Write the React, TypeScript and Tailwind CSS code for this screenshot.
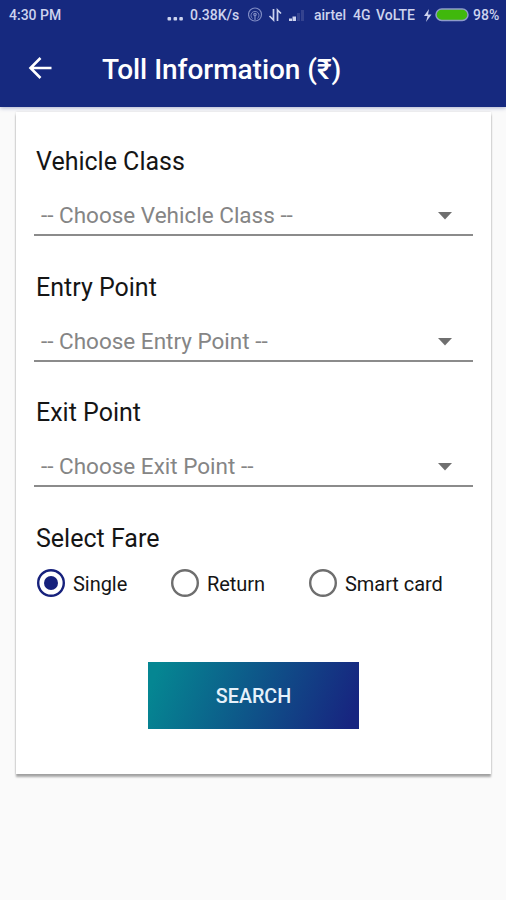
import React, { useState } from 'react'

interface SelectFieldProps {
  label: string;
  placeholder: string;
}

const fields: SelectFieldProps[] = [
  { label: 'Vehicle Class', placeholder: '-- Choose Vehicle Class --' },
  { label: 'Entry Point', placeholder: '-- Choose Entry Point --' },
  { label: 'Exit Point', placeholder: '-- Choose Exit Point --' },
]

const fares = [
  { name: 'Single', width: 'w-[134px]' },
  { name: 'Return', width: 'w-[138px]' },
  { name: 'Smart card', width: 'w-[150px]' },
]

const StatusBar = () => {
  return (
    <div className="flex h-[30px] items-center whitespace-nowrap pl-[9px] text-[14px] leading-[30px] font-medium text-[#cdd3ee]">
      <span className="w-[158px]">4:30 PM</span>
      <svg className="mt-2 w-[23px]" height="4" viewBox="0 0 23 4" fill="#cdd3ee">
        <rect x="0.500" width="3.600" height="3.600" rx="1" />
        <rect x="6.500" width="3.600" height="3.600" rx="1" />
        <rect x="12.300" width="3.600" height="3.600" rx="1" />
      </svg>
      <span className="w-[58px]">0.38K/s</span>
      {/* hotspot, data arrows, signal */}
      <svg width="66" height="20" viewBox="0 0 66 20" fill="none">
        <g stroke="#7f8bc4" strokeWidth="1.200">
          <circle cx="7" cy="9.500" r="6.500" />
          <path d="M4.500 13.500a4 4 0 1 1 5 0" strokeWidth="0.900" />
          <path d="M7 15v-4.500" />
          <circle cx="7" cy="9.500" r="1.200" />
        </g>
        <path d="M25.500 4v11L21.500 11M29.500 16V5L33 8.500" stroke="#cdd3ee" strokeWidth="1.700" />
        <path d="M41 16v-2.500h3V16zM44.500 16v-4.500h3.500V16z" fill="#cdd3ee" />
        <path d="M49 16V8h3v8zM53 16V5h3v11z" fill="#34438f" />
      </svg>
      <span className="w-[39px]">airtel</span>
      <span className="w-[23px]">4G</span>
      <span className="w-[47px]">VoLTE</span>
      <svg width="50" height="20" viewBox="0 0 50 20">
        <path d="M6 4L1 11h3.500L3 17l5.500-7.500H5z" fill="#cdd3ee" />
        <rect x="13" y="4" width="32" height="11.500" rx="5.750" fill="#40b80c" stroke="#8e9bca" strokeWidth="1.500" />
      </svg>
      <span>98%</span>
    </div>
  )
}

const SelectField = ({ label, placeholder }: SelectFieldProps) => {
  return (
    <div className="h-[125.6px]">
      <p className="pl-[2px] text-[25px] leading-[30px] text-[#151515]">{label}</p>
      <button className="mt-[16px] flex h-[43px] w-full items-center justify-between border-b-2 border-[#8b8b8b] pt-[5px] pr-[21px] pl-[7px] text-[22.500px] text-[#858585]">
        <span>{placeholder}</span>
        <svg width="14" height="8" viewBox="0 0 14 8" fill="#6f6f6f">
          <path d="M0 0h14L7 7.500z" />
        </svg>
      </button>
    </div>
  )
}

const App = () => {
  const [fare, setFare] = useState('Single')

  return (
    <div className="h-[900px] w-[506px] overflow-hidden bg-[#fafafa] font-['Roboto',sans-serif]">
      <header className="h-[107px] bg-[#16297f] shadow-[0_1px_4px_rgba(22,41,127,0.35)]">
        <StatusBar />
        <div className="flex h-[78px] items-center pl-[28px] text-white">
          <svg className="-mt-[2px]" width="24" height="24" viewBox="0 0 24 24" fill="none" stroke="white" strokeWidth="2.600">
            <path d="M23.500 12H3M12.500 2L2.500 12L12.500 22" />
          </svg>
          <h1 className="mt-[2px] ml-[50px] text-[28px] font-medium tracking-[-0.03px]">Toll Information (₹)</h1>
        </div>
      </header>

      <main className="mx-[16px] mt-[5px] h-[662px] w-[475px] bg-white px-[18px] pt-[35px] shadow-[0_3px_2px_rgba(0,0,0,0.33),0_0_2px_rgba(0,0,0,0.12)]">
        {fields.map((field) => (
          <SelectField key={field.label} {...field} />
        ))}

        <p className="pl-[2px] text-[25px] leading-[30px] text-[#151515]">Select Fare</p>
        <div className="mt-[14px] flex h-[30px] pl-[3px]">
          {fares.map(({ name, width }) => (
            <button key={name} onClick={() => setFare(name)} className={`flex items-center whitespace-nowrap text-[20px] text-[#151515] ${width}`}>
              <svg className="mr-[8px] shrink-0" width="28" height="28" viewBox="0 0 28 28" fill="none">
                <circle cx="14" cy="14" r="12.800" stroke={fare === name ? '#16217c' : '#6e6e6e'} strokeWidth="2.400" />
                {fare === name && <circle cx="14" cy="14" r="7" fill="#16217c" />}
              </svg>
              <span className="mt-[2px] tracking-[-0.05px]">{name}</span>
            </button>
          ))}
        </div>

        <button className="mx-auto mt-[64px] block h-[67px] w-[211px] bg-[linear-gradient(110deg,#058692_5%,#172580_95%)] pt-[3px] text-[19.700px] font-medium text-[#e6f1fa]">
          SEARCH
        </button>
      </main>
    </div>
  )
}

export default App
